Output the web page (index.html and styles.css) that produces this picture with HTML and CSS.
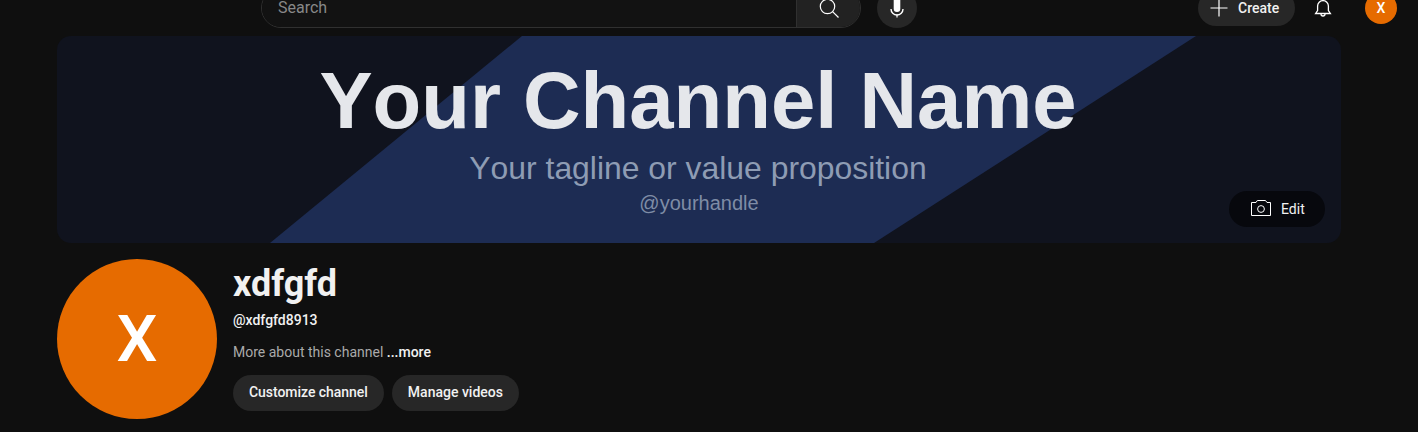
FILE: index.html
```html
<!DOCTYPE html>
<html lang="en">
<head>
  <meta charset="UTF-8">
  <meta name="viewport" content="width=device-width, initial-scale=1.0">
  <title>xdfgfd - YouTube Studio</title>
  <link rel="stylesheet" href="styles.css">
</head>
<body>
  <!-- Top bar, page is scrolled a little so the top is cut off -->
  <header class="topbar">
    <div class="search-group">
      <div class="search">
        <div class="search-input">Search</div>
        <div class="search-btn">
          <svg width="24" height="24" viewBox="0 0 24 24" fill="none" stroke="#fff" stroke-width="1.2">
            <circle cx="10.5" cy="10.5" r="7.2"/>
            <path d="M15.6 15.6 L21.5 21.5"/>
          </svg>
        </div>
      </div>
      <div class="mic-btn">
        <svg width="24" height="24" viewBox="0 0 24 24" fill="#fff">
          <rect x="8.7" y="1" width="6.6" height="15" rx="3.3"/>
          <path d="M6 13a6 6 0 0 0 12 0" fill="none" stroke="#fff" stroke-width="1.4"/>
          <rect x="11.4" y="18.5" width="1.2" height="3"/>
        </svg>
      </div>
    </div>
    <div class="top-actions">
      <div class="create-btn">
        <svg width="24" height="24" viewBox="0 0 24 24" stroke="#fff" stroke-width="1.2">
          <path d="M12 3.5v17M3.5 12h17"/>
        </svg>
        <span>Create</span>
      </div>
      <div class="bell">
        <svg width="24" height="24" viewBox="0 0 24 24" fill="none" stroke="#fff" stroke-width="1.3">
          <path d="M4.6 17.5h14.8l-2-3V10a5.4 5.4 0 0 0-10.8 0v4.5z"/>
          <path d="M10 18a2 2 0 0 0 4 0"/>
        </svg>
      </div>
      <div class="top-avatar">X</div>
    </div>
  </header>

  <main class="channel">
    <section class="banner">
      <div class="banner-band"></div>
      <div class="banner-text">
        <h1>Your Channel Name</h1>
        <p class="tagline">Your tagline or value proposition</p>
        <p class="handle">@yourhandle</p>
      </div>
      <div class="edit-btn">
        <svg width="24" height="24" viewBox="0 0 24 24" fill="none" stroke="#fff" stroke-width="1">
          <path d="M2.5 5.5H7l1.3-2h8.2l1.5 2h3.5v13h-19z"/>
          <circle cx="12" cy="12" r="3.4"/>
        </svg>
        <span>Edit</span>
      </div>
    </section>

    <section class="info">
      <div class="avatar">X</div>
      <div class="details">
        <h2>xdfgfd</h2>
        <div class="at">@xdfgfd8913</div>
        <div class="about">More about this channel <b>...more</b></div>
        <div class="buttons">
          <div class="pill pill-first">Customize channel</div>
          <div class="pill">Manage videos</div>
        </div>
      </div>
    </section>
  </main>
</body>
</html>
```

FILE: styles.css
```css
body {
  margin: 0;
  background: #0f0f0f;
  color: #f1f1f1;
  font-family: 'Roboto', sans-serif;
  overflow: hidden;
}
.topbar {
  height: 36px;
  display: flex;
  align-items: flex-end;
  justify-content: space-between;
  padding: 0 21px 8px 261px;
  box-sizing: border-box;
}
.search-group {
  display: flex;
  align-items: center;
  gap: 16px;
}
.search {
  width: 600px;
  height: 40px;
  display: flex;
  box-sizing: border-box;
  border: 1px solid #303030;
  border-radius: 20px;
  overflow: hidden;
}
.search-input {
  flex: 1;
  padding-left: 16px;
  font-size: 16px;
  line-height: 38px;
  color: #888;
  background: #121212;
}
.search-btn {
  width: 63px;
  background: #222;
  border-left: 1px solid #303030;
  display: flex;
  align-items: center;
  justify-content: center;
}
.mic-btn {
  width: 40px;
  height: 40px;
  border-radius: 50%;
  background: #272727;
  display: flex;
  align-items: center;
  justify-content: center;
}
.top-actions {
  display: flex;
  align-items: center;
  margin-bottom: 2px;
}
.create-btn {
  height: 36px;
  width: 97px;
  box-sizing: border-box;
  padding-left: 9px;
  border-radius: 18px;
  background: #272727;
  display: flex;
  align-items: center;
  gap: 7px;
  font-size: 14px;
  font-weight: 500;
}
.bell {
  margin-left: 16px;
  width: 24px;
  height: 24px;
}
.top-avatar {
  margin-left: 30px;
  width: 32px;
  height: 32px;
  border-radius: 50%;
  background: #e66b00;
  color: #fff;
  font-size: 14px;
  font-weight: 500;
  display: flex;
  align-items: center;
  justify-content: center;
}
.channel {
  padding: 0 77px 0 57px;
}
.banner {
  position: relative;
  height: 207px;
  border-radius: 14px;
  overflow: hidden;
  background: #10131e;
}
/* diagonal blue band */
.banner-band {
  position: absolute;
  inset: 0;
  background: #1d2c53;
  clip-path: polygon(465px 0, 1139px 0, 817px 100%, 213px 100%);
}
.banner-text {
  position: relative;
  text-align: center;
  padding-top: 22px;
  margin-left: -2px;
  font-family: 'Liberation Sans', Arial, sans-serif;
  font-kerning: none;
}
.banner-text h1 {
  margin: 0;
  font-size: 79.7px;
  line-height: 86px;
  font-weight: 700;
  color: #e5e7eb;
}
.tagline {
  margin: 6px 0 0;
  font-size: 31.9px;
  line-height: 36px;
  color: #8e9cb4;
}
.handle {
  margin: 5px 0 0 2px;
  font-size: 20px;
  line-height: 24px;
  color: #7f8ca6;
}
.edit-btn {
  position: absolute;
  right: 16px;
  bottom: 16px;
  width: 96px;
  height: 36px;
  border-radius: 18px;
  background: #07080d;
  display: flex;
  align-items: center;
  gap: 8px;
  padding: 0 0 1px 20px;
  box-sizing: border-box;
  font-size: 14px;
}
.edit-btn svg {
  margin-top: 1px;
}
.info {
  display: flex;
  gap: 16px;
  margin-top: 16px;
}
.avatar {
  width: 160px;
  height: 160px;
  border-radius: 50%;
  background: #e66b00;
  color: #fff;
  font-size: 65px;
  font-weight: 500;
  display: flex;
  align-items: center;
  justify-content: center;
}
.details h2 {
  margin: 0;
  font-size: 36px;
  line-height: 50px;
  font-weight: 700;
}
.at {
  font-size: 14px;
  line-height: 20px;
  font-weight: 500;
  margin-top: 1px;
}
.about {
  margin-top: 12px;
  font-size: 14px;
  line-height: 20px;
  color: #aaa;
}
.about b {
  color: #f1f1f1;
  font-weight: 500;
}
.buttons {
  display: flex;
  gap: 8px;
  margin-top: 13px;
}
.pill {
  height: 36px;
  line-height: 35px;
  padding: 0 16px;
  border-radius: 18px;
  background: #272727;
  font-size: 14px;
  font-weight: 500;
}
.pill-first {
  letter-spacing: -0.04px;
}
```
